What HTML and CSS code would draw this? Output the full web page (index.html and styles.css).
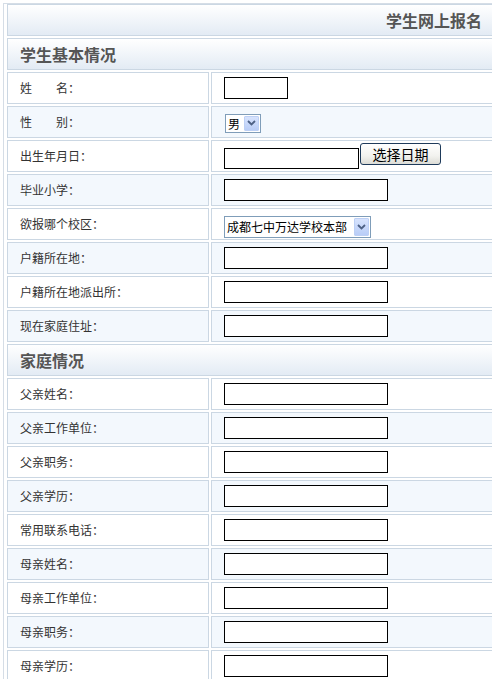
FILE: index.html
```html
<!DOCTYPE html>
<html lang="zh">
<head>
<meta charset="utf-8">
<title>学生网上报名</title>
<link rel="stylesheet" href="styles.css">
</head>
<body>
<div class="frame">
<table class="form">
  <colgroup><col class="c1"><col class="c2"></colgroup>
  <tr><td colspan="2" class="title">学生网上报名</td></tr>
  <tr><td colspan="2" class="section">学生基本情况</td></tr>
  <tr><td class="label">姓　　名：</td><td class="field"><input class="txt short" type="text"></td></tr>
  <tr class="alt"><td class="label">性　　别：</td><td class="field">
    <span class="select sex"><select><option>男</option><option>女</option></select><span class="arrow"><svg width="9" height="6" viewBox="0 0 9 6"><path d="M1 1 L4.5 4.5 L8 1" fill="none" stroke="#4d6185" stroke-width="1.8"/></svg></span></span>
  </td></tr>
  <tr><td class="label">出生年月日：</td><td class="field"><div class="date"><input class="txt date-input" type="text"><button class="btn" type="button">选择日期</button></div></td></tr>
  <tr class="alt"><td class="label">毕业小学：</td><td class="field"><input class="txt" type="text"></td></tr>
  <tr><td class="label">欲报哪个校区：</td><td class="field">
    <span class="select school"><select><option>成都七中万达学校本部</option></select><span class="arrow"><svg width="9" height="6" viewBox="0 0 9 6"><path d="M1 1 L4.5 4.5 L8 1" fill="none" stroke="#4d6185" stroke-width="1.8"/></svg></span></span>
  </td></tr>
  <tr class="alt"><td class="label">户籍所在地：</td><td class="field"><input class="txt" type="text"></td></tr>
  <tr><td class="label">户籍所在地派出所：</td><td class="field"><input class="txt" type="text"></td></tr>
  <tr class="alt"><td class="label">现在家庭住址：</td><td class="field"><input class="txt" type="text"></td></tr>
  <tr><td colspan="2" class="section">家庭情况</td></tr>
  <tr><td class="label">父亲姓名：</td><td class="field"><input class="txt" type="text"></td></tr>
  <tr class="alt"><td class="label">父亲工作单位：</td><td class="field"><input class="txt" type="text"></td></tr>
  <tr><td class="label">父亲职务：</td><td class="field"><input class="txt" type="text"></td></tr>
  <tr class="alt"><td class="label">父亲学历：</td><td class="field"><input class="txt" type="text"></td></tr>
  <tr><td class="label">常用联系电话：</td><td class="field"><input class="txt" type="text"></td></tr>
  <tr class="alt"><td class="label">母亲姓名：</td><td class="field"><input class="txt" type="text"></td></tr>
  <tr><td class="label">母亲工作单位：</td><td class="field"><input class="txt" type="text"></td></tr>
  <tr class="alt"><td class="label">母亲职务：</td><td class="field"><input class="txt" type="text"></td></tr>
  <tr><td class="label">母亲学历：</td><td class="field"><input class="txt" type="text"></td></tr>
</table>
</div>
</body>
</html>
```

FILE: styles.css
```css
html, body {
  margin: 0;
  padding: 0;
  background: #fff;
  overflow: hidden;
}
body {
  font-family: "Noto Sans CJK SC", "Noto Sans", sans-serif;
  font-size: 12px;
  color: #333;
}
.frame {
  margin: 3px 0 0 3px;
  border-left: 1px solid #d5dde6;
  border-top: 1px solid #d5dde6;
  padding-left: 1px;
  overflow: hidden;
}
.form {
  border-collapse: separate;
  border-spacing: 2px;
  width: 498px;
  margin-top: -2px;
  table-layout: fixed;
}
.form col.c1 {
  width: 202px;
}
.form td {
  box-sizing: border-box;
  height: 32px;
  border: 1px solid #cbd7e3;
  padding: 0 12px;
  vertical-align: middle;
}
.form td.label {
  line-height: 16px;
}
.form tr.alt td {
  background: #f3f8fd;
}
.form td.title {
  background: linear-gradient(#ffffff, #e3ebf4);
  text-align: right;
  font-size: 16px;
  font-weight: bold;
  color: #555;
  padding-right: 18px;
}
.form td.section {
  background: linear-gradient(#ffffff, #e3ebf4);
  font-size: 16px;
  font-weight: bold;
  color: #555;
}
.txt {
  box-sizing: border-box;
  display: block;
  width: 164px;
  height: 22px;
  margin: 0;
  border: 1px solid #000;
  padding: 1px 2px;
  background: #fff;
  font: 12px "Noto Sans CJK SC", sans-serif;
}
.txt.short {
  width: 64px;
}
.date {
  display: flex;
  align-items: flex-start;
}
.txt.date-input {
  width: 135px;
  height: 21px;
  margin-top: 5px;
}
.btn {
  box-sizing: border-box;
  width: 81px;
  height: 22px;
  margin: 0 0 0 1px;
  padding: 0;
  border: 1px solid #1e3a5a;
  border-radius: 3px;
  background: linear-gradient(#ffffff, #f2f2ee 60%, #dcdcd6);
  font: 14px "Noto Sans CJK SC", sans-serif;
  line-height: 18px;
  color: #000;
  letter-spacing: 0;
}
.select {
  box-sizing: border-box;
  display: inline-flex;
  align-items: center;
  border: 1px solid #7f9db9;
  background: #fff;
  vertical-align: middle;
  padding: 1px;
}
.select select {
  appearance: none;
  -webkit-appearance: none;
  border: 0;
  background: transparent;
  padding: 0 0 0 1px;
  margin: 0;
  font: 12px "Noto Sans CJK SC", sans-serif;
  color: #000;
  outline: none;
}
.select .arrow {
  box-sizing: border-box;
  display: flex;
  align-items: center;
  justify-content: center;
  width: 15px;
  border: 1px solid #bdd0f5;
  border-radius: 1px;
  background: linear-gradient(#d7e3fd, #b9cdf7);
}
.select.sex {
  width: 36px;
  height: 19px;
  margin: 2px 0 0 1px;
}
.select.sex select {
  width: 17px;
  margin-right: 1px;
}
.select.sex .arrow {
  height: 15px;
}
.select.school {
  width: 147px;
  height: 22px;
  margin-top: 5px;
}
.select.school select {
  width: 127px;
  margin-right: 1px;
}
.select.school .arrow {
  height: 18px;
}
```
